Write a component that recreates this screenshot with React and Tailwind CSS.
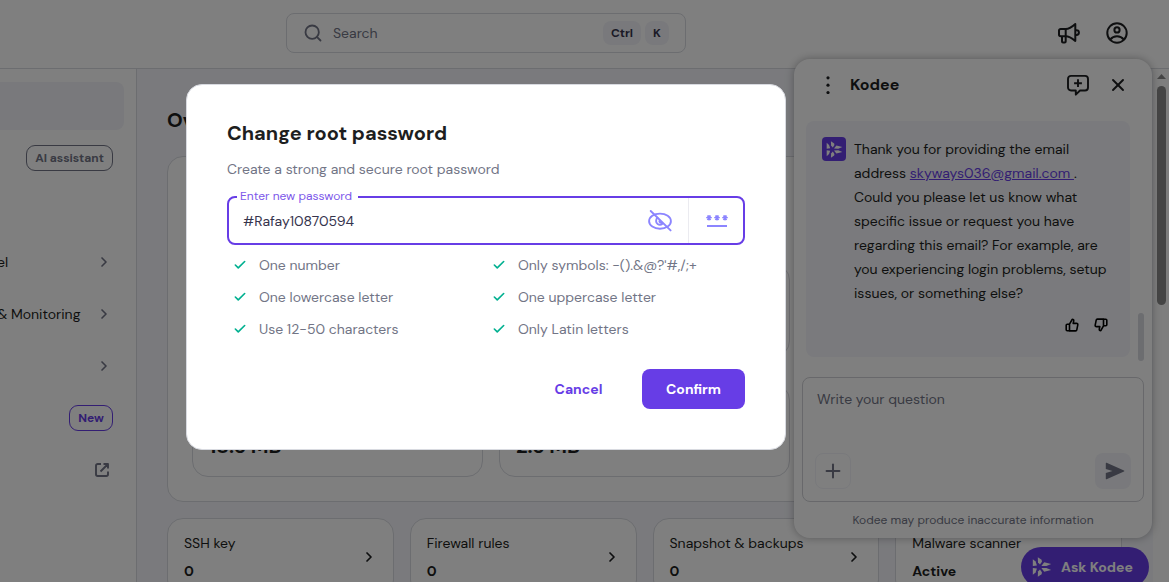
import React from "react";
import { ChevronRight, Check, Search, X, Plus } from "lucide-react";

const requirements = [
  "One number",
  "Only symbols: -().&@?'#,/;+",
  "One lowercase letter",
  "One uppercase letter",
  "Use 12-50 characters",
  "Only Latin letters",
];

const tiles = [
  ["SSH key", "0"],
  ["Firewall rules", "0"],
  ["Snapshot & backups", "0"],
  ["Malware scanner", "Active"],
];

function KodeeMark({ className }) {
  return (
    <svg viewBox="0 0 20 20" className={className} fill="currentColor">
      <path d="M.8 2.200 3.600 4.600 4.900 8.600.8 9Z" />
      <path d="M.8 17.800 3.600 15.400 4.900 11.400.8 11Z" />
      <path d="M5.800.2 9.600 2.800 9.900 4.800 8 7.600 6 5.400Z" />
      <path d="M5.800 19.800 9.600 17.200 9.900 15.200 8 12.400 6 14.600Z" />
      <path d="M9.400 8.900 12.200 5.300 19.200 7 14.400 9Z" />
      <path d="M9.400 11.100 12.200 14.700 19.200 13 14.400 11Z" />
    </svg>
  );
}

function Megaphone() {
  return (
    <svg viewBox="0 0 24 24" className="size-6" fill="none" stroke="currentColor" strokeWidth="2" strokeLinejoin="round">
      <path d="M8.700 7.900H3.700a1.700 1.700 0 0 0-1.700 1.700v3.900a1.700 1.700 0 0 0 1.700 1.700h5c3.300 0 6.300 2 9.600 4.700V2.900C15 5.900 12 7.900 8.700 7.900Z" />
      <path d="M8.700 7.900v7.300M5 15.200v5.300a1 1 0 0 0 1 1h1.700a1 1 0 0 0 1-1v-5.300M18.300 9.200h1.200a2.400 2.400 0 0 1 0 4.800h-1.200" />
    </svg>
  );
}

function Account() {
  return (
    <svg viewBox="0 0 24 24" className="size-6" fill="none" stroke="currentColor" strokeWidth="2">
      <circle cx="12" cy="12" r="9.700" />
      <circle cx="12" cy="8.900" r="2.600" />
      <path d="M5.200 18.600C7 16.300 9.300 15.300 12 15.300s5 1 6.800 3.300" />
    </svg>
  );
}

function ChatPlus() {
  return (
    <svg viewBox="0 0 24 24" className="size-6" fill="none" stroke="currentColor" strokeWidth="1.900" strokeLinejoin="round">
      <path d="M5 2.900h14a3 3 0 0 1 3 3v8.600a3 3 0 0 1-3 3h-5l-4.200 4.200v-4.200H5a3 3 0 0 1-3-3V5.900a3 3 0 0 1 3-3Z" />
      <path d="M12 6.300v7.800M8.100 10.200h7.800" />
    </svg>
  );
}

function Thumb({ className }) {
  return (
    <svg viewBox="0 0 14 14" className={className} fill="none" stroke="currentColor" strokeWidth="1.600" strokeLinejoin="round">
      <path d="M4.500 6.200 7.200 1.300c1.300 0 1.700.8 1.500 1.700L8.200 5.400h3.300c1 0 1.500.6 1.300 1.500l-1 5c-.1.600-.6 1-1.200 1H4.500Z" />
      <path d="M4.500 6.200H2.200a1 1 0 0 0-1 1v4.600a1 1 0 0 0 1 1h2.300" />
    </svg>
  );
}

function EyeOff() {
  return (
    <svg viewBox="0 0 24 24" className="size-6" fill="none" stroke="currentColor" strokeWidth="1.900" strokeLinecap="round">
      <ellipse cx="12" cy="12.200" rx="10.900" ry="7.600" />
      <path d="M2.700 2 22.600 21.400" />
      <path d="M9.500 8.800C7.600 10.200 7.600 13.600 9.600 15c1.400 1 3.500.9 4.800-.3M11.400 12.300c.2 1 1 1.400 2 1.200" />
    </svg>
  );
}

function Generate() {
  return (
    <svg viewBox="0 0 24 24" className="size-6" fill="none" stroke="currentColor">
      <path
        strokeWidth="1.300"
        d="M4 6v5.400M1.200 8.700h5.600M2.300 6.600l3.400 4.200M5.700 6.600l-3.400 4.200M12 6v5.400M9.200 8.700h5.600M10.300 6.600l3.400 4.200M13.700 6.600l-3.400 4.200M20 6v5.400M17.200 8.700h5.600M18.300 6.600l3.400 4.200M21.700 6.600l-3.400 4.200"
      />
      <path strokeWidth="2" d="M2 17h20" />
    </svg>
  );
}

function External() {
  return (
    <svg viewBox="0 0 16 16" className="size-4" fill="none" stroke="currentColor" strokeWidth="1.900" strokeLinejoin="round">
      <path d="M7 2H3.700A1.700 1.700 0 0 0 2 3.700v8.600A1.700 1.700 0 0 0 3.700 14h8.600a1.700 1.700 0 0 0 1.700-1.700V9.500M9.500 2H14v4.500M14 2 6.500 9.500" />
    </svg>
  );
}

function Header() {
  return (
    <header className="flex h-[69px] shrink-0 items-start border-b border-[#d8dae0] bg-white pt-[13px]">
      <div className="ml-[286px] flex h-10 w-[400px] items-center rounded-lg border border-[#d8dae0] pr-4 pl-4">
        <Search className="size-5 text-[#727586]" strokeWidth={2.2} />
        <span className="ml-[10px] flex-1 text-sm text-[#727586]">Search</span>
        <span className="flex h-6 w-[38px] items-center justify-center rounded-lg bg-[#f2f3f8] text-xs font-bold text-[#36344d]">Ctrl</span>
        <span className="ml-1 flex size-6 items-center justify-center rounded-lg bg-[#f2f3f8] text-xs font-bold text-[#36344d]">K</span>
      </div>
      <div className="ml-[371px] flex h-10 items-center gap-6 text-[#1d1e20]">
        <Megaphone />
        <Account />
      </div>
    </header>
  );
}

function Sidebar() {
  return (
    <aside className="flex w-[137px] shrink-0 flex-col border-r border-[#d8dae0] bg-white pt-[13px] text-sm text-[#1d1e20]">
      <div className="h-12 w-[124px] rounded-r-lg bg-[#f2f3f8]" />
      <div className="mt-[15px] flex h-[26px] justify-end pr-[23px]">
        <span className="flex h-full w-[87px] items-center justify-center rounded-[9px] border border-[#727586] text-xs font-bold text-[#727586]">AI assistant</span>
      </div>
      <div className="mt-[65px] flex h-[52px] items-center justify-between pr-6">
        <span className="-ml-[3px]">el</span>
        <ChevronRight className="size-4 text-[#727586]" strokeWidth={2.5} />
      </div>
      <div className="flex h-[52px] items-center justify-between pr-6">
        <span className="-ml-[3px] whitespace-nowrap">&amp; Monitoring</span>
        <ChevronRight className="size-4 text-[#727586]" strokeWidth={2.5} />
      </div>
      <div className="flex h-[52px] items-center justify-end pr-6">
        <ChevronRight className="size-4 text-[#727586]" strokeWidth={2.5} />
      </div>
      <div className="flex h-[52px] items-center justify-end pr-[23px]">
        <span className="flex h-[26px] w-11 items-center justify-center rounded-[9px] border border-[#673de6] text-xs font-bold text-[#673de6]">New</span>
      </div>
      <div className="flex h-[52px] items-center justify-end pr-[26px] text-[#727586]">
        <External />
      </div>
    </aside>
  );
}

function Stat({ value }) {
  return (
    <div className="flex h-[93px] items-end rounded-2xl border border-[#d8dae0] px-4 pb-4 text-xl font-bold">
      {value}
    </div>
  );
}

function Main() {
  return (
    <main className="flex w-[1016px] shrink-0 flex-col bg-[#f4f5fa] pr-[31px] pl-[30px] text-[#1d1e20]">
      <h1 className="mt-[37px] text-xl leading-7 font-bold">Overview</h1>
      <section className="mt-[22px] flex h-[346px] shrink-0 flex-col justify-end rounded-2xl border border-[#d8dae0] bg-white px-6 pb-6">
        <div className="grid grid-cols-3 gap-x-4 gap-y-[27px]">
          <Stat /><Stat /><Stat />
          <Stat value="18.6 MB" /><Stat value="2.6 MB" /><Stat />
        </div>
      </section>
      <section className="mt-4 grid grid-cols-4 gap-4">
        {tiles.map(([label, value]) => (
          <div key={label} className="flex h-[78px] items-center justify-between rounded-2xl border border-[#d8dae0] bg-white px-4">
            <div className="flex flex-col gap-1 text-sm leading-6 whitespace-nowrap">
              <span>{label}</span>
              <b>{value}</b>
            </div>
            <ChevronRight className="size-4" strokeWidth={2.6} />
          </div>
        ))}
      </section>
    </main>
  );
}

function Scrollbar() {
  return (
    <div className="flex w-4 shrink-0 flex-col items-center bg-[#fcfcfc] pt-[5px] pl-px">
      <svg viewBox="0 0 9 5" className="h-[5px] w-[9px]" fill="#8b8b8b"><path d="M0 5 4.500 0 9 5Z" /></svg>
      <div className="mt-[7px] h-[219px] w-[9px] rounded-full bg-[#8b8b8b]" />
    </div>
  );
}

function Kodee() {
  return (
    <section className="absolute top-[59px] left-[794px] flex h-[479px] w-[358px] flex-col rounded-2xl bg-white text-[#1d1e20] shadow-[0_0_9px_rgba(29,30,32,0.35)]">
      <div className="flex h-[52px] shrink-0 items-center pr-6 pl-[26px]">
        <svg viewBox="0 0 16 18" className="h-[18px] w-4" fill="currentColor">
          <circle cx="8" cy="1.800" r="1.600" /><circle cx="8" cy="9.200" r="1.600" /><circle cx="8" cy="16.500" r="1.600" />
        </svg>
        <h2 className="ml-[14px] flex-1 text-base font-bold">Kodee</h2>
        <ChatPlus />
        <X className="ml-[18px] size-5" strokeWidth={2.3} />
      </div>
      <div className="mt-[10px] ml-3 flex h-[236px] gap-2">
        <div className="flex w-[324px] flex-col rounded-lg bg-[#f4f5fa] pt-4 pl-4">
          <div className="flex gap-2">
            <span className="flex size-6 shrink-0 items-center justify-center rounded bg-[#673de6] text-white"><KodeeMark className="size-[17px]" /></span>
            <p className="text-sm leading-6 whitespace-nowrap">
              Thank you for providing the email<br />
              address <span className="text-[#673de6] underline">skyways036@gmail.com&nbsp;</span>.<br />
              Could you please let us know what<br />
              specific issue or request you have<br />
              regarding this email? For example, are<br />
              you experiencing login problems, setup<br />
              issues, or something else?
            </p>
          </div>
          <div className="mt-[13px] flex justify-end gap-[15px] pr-[22.5px] text-black">
            <Thumb className="size-[14px]" />
            <Thumb className="size-[14px] rotate-180" />
          </div>
        </div>
        <div className="flex w-[6px] items-end"><div className="-mb-1 h-12 w-[6px] rounded-full bg-[#d8dae0]" /></div>
      </div>
      <div className="mt-5 ml-2 flex h-[125px] w-[342px] flex-col justify-between rounded-lg border border-[#d0d1d6] px-3 pt-[9px] pb-3">
        <span className="pl-0.5 text-sm leading-6 text-[#727586]">Write your question</span>
        <div className="flex justify-between text-[#727586]">
          <span className="flex size-9 items-center justify-center rounded-lg border border-[#f2f3f8]"><Plus className="size-[22px]" strokeWidth={2.2} /></span>
          <span className="flex size-9 items-center justify-center rounded-lg bg-[#f2f3f8] pl-[3px]">
            <svg viewBox="0 0 20 18" className="h-[18px] w-5" fill="currentColor"><path d="M.8 1.200Q.8.500 1.600.8L19 8.400Q19.800 9 19 9.600L1.600 17.200Q.8 17.500.8 16.800V11L7.500 9 .8 7Z" /></svg>
          </span>
        </div>
      </div>
      <p className="mt-2 text-center text-xs leading-5 text-[#727586]">Kodee may produce inaccurate information</p>
    </section>
  );
}

function Modal() {
  return (
    <div className="absolute top-[84px] left-[186px] flex h-[366px] w-[600px] flex-col rounded-2xl border border-[#d8dae0] bg-white px-10 text-[#727586]">
      <h2 className="mt-8 text-xl leading-8 font-bold text-[#1d1e20]">Change root password</h2>
      <p className="mt-2 text-sm leading-6">Create a strong and secure root password</p>
      <div className="relative mt-[15px] flex h-[49px] items-center rounded-lg border-2 border-[#673de6]">
        <span className="absolute -top-3 left-2 w-[121px] bg-white pl-[3px] text-xs leading-5 whitespace-nowrap text-[#7d58ea]">Enter new password</span>
        <span className="flex-1 pl-[14px] text-sm text-[#36344d]">#Rafay10870594</span>
        <span className="mr-4 text-[#8c85ff]"><EyeOff /></span>
        <span className="flex h-full w-[55px] items-center justify-center border-l border-[#ebebf0] pl-0.5 text-[#8c85ff]"><Generate /></span>
      </div>
      <ul className="mt-1 grid grid-cols-2 text-sm">
        {requirements.map((label) => (
          <li key={label} className="flex h-8 items-center pl-[6px]">
            <Check className="size-[14px] text-[#00b090]" strokeWidth={2.8} />
            <span className="ml-3">{label}</span>
          </li>
        ))}
      </ul>
      <div className="mt-6 flex items-center justify-end text-sm font-bold">
        <span className="flex h-10 w-[127px] items-center justify-center text-[#673de6]">Cancel</span>
        <span className="flex h-10 w-[103px] items-center justify-center rounded-lg bg-[#673de6] text-white">Confirm</span>
      </div>
    </div>
  );
}

export default function App() {
  return (
    <div className="relative flex h-[582px] w-[1169px] flex-col overflow-hidden bg-white font-['DM_Sans','Inter',sans-serif]">
      <Header />
      <div className="flex min-h-0 flex-1">
        <Sidebar />
        <Main />
        <Scrollbar />
      </div>
      <Kodee />
      <div className="absolute top-[547px] left-[1021px] flex h-10 w-32 items-center rounded-full bg-[#673de6] pl-[11px] text-sm font-bold text-white">
        <KodeeMark className="size-5" />
        <span className="ml-[9px]">Ask Kodee</span>
      </div>
      <div className="absolute inset-0 bg-black/50" />
      <Modal />
    </div>
  );
}
